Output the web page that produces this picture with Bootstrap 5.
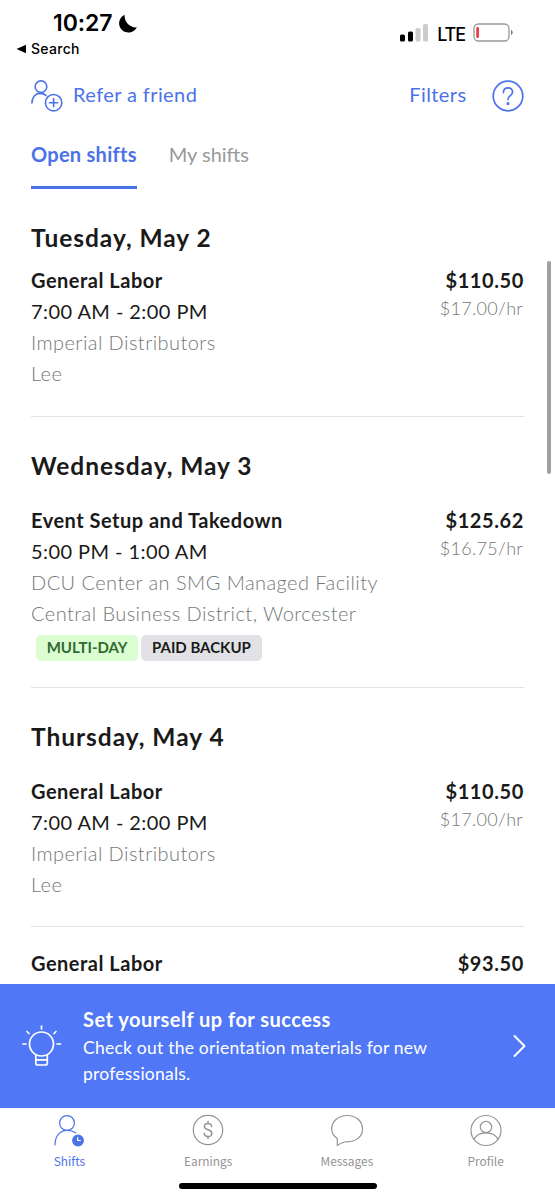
<!DOCTYPE html>
<html lang="en">
<head>
<meta charset="utf-8">
<meta name="viewport" content="width=device-width, initial-scale=1">
<title>Open shifts</title>
<link href="https://cdn.jsdelivr.net/npm/bootstrap@5.3.0/dist/css/bootstrap.min.css" rel="stylesheet">
<style>
  :root { --brand: #4c72e8; --ink: #1a1a1a; --muted: #747878; }
  body { font-family: Lato, "Liberation Sans", sans-serif; color: var(--ink); background: #fff; font-size: 20px; line-height: 31px; }
  svg { display: block; flex: none; }
  .screen { height: 1200px; }
  .statusbar { height: 66px; font-family: Inter, sans-serif; color: #000; padding: 10px 40px 0 16px; }
  .clock { font-size: 23px; font-weight: 600; line-height: 27px; padding-left: 37px; letter-spacing: -.1px; gap: 6px; }
  .back-link { font-size: 14px; font-weight: 500; line-height: 20px; letter-spacing: .3px; margin-top: 2px; }
  .network { font-size: 18px; line-height: 24px; font-weight: 500; letter-spacing: -1.1px; padding-top: 12px; }
  .network-type { padding-top: 1px; }
  .topbar { height: 57px; padding: 0 31px; color: var(--brand); letter-spacing: .4px; }
  .topbar svg { position: relative; top: 1px; }
  .refer { margin-left: 10px; }
  .help { margin-left: 25.5px; }
  .tabs { height: 66px; padding-left: 31px; gap: 32px; }
  .tab-item { height: 66px; padding-top: 16px; color: #999; }
  .tab-item.current { color: var(--brand); font-weight: 700; border-bottom: 3px solid var(--brand); letter-spacing: .27px; }
  .feed { padding: 34px 31px 0; }
  .day { font-size: 24.5px; font-weight: 700; line-height: 30px; margin: 0 0 24px; letter-spacing: .97px; }
  .day.first { margin-bottom: 12px; }
  .shift { border-bottom: 1px solid #e2e2e2; padding-bottom: 27px; margin-bottom: 34px; }
  .shift.tagged { padding-bottom: 26px; }
  .shift.compact { padding-bottom: 26px; margin-bottom: 21px; }
  .role { font-weight: 700; letter-spacing: .5px; }
  .pay { letter-spacing: .6px; }
  .place { color: var(--muted); font-weight: 300; letter-spacing: .44px; }
  .hours { letter-spacing: .43px; }
  .rate { font-size: 18px; line-height: 25px; color: var(--muted); font-weight: 300; letter-spacing: .3px; padding-right: 1px; }
  .tags { gap: 3px; margin: 6px 0 0 5px; }
  .tag { font-size: 15px; font-weight: 700; line-height: 25px; height: 26px; border-radius: 5px; padding: 0 10.7px; }
  .tag-green { background: #dcfcd2; color: #2d6b2b; }
  .tag-grey { background: #e2e2e6; }
  .scroll-thumb { right: 4px; top: 261px; width: 4px; height: 213px; background: #a0a0a0; border-radius: 2px; }
  .promo { height: 124px; background: #5078f6; color: #fff; padding: 0 29px 0 22px; }
  .promo-copy { margin-left: 21px; }
  .promo-title { font-weight: 700; line-height: 30px; letter-spacing: .48px; margin-top: -1px; }
  .promo-text { font-size: 17.5px; line-height: 26px; letter-spacing: .23px; padding-top: 1px; }
  .bottom-nav { height: 92px; font-family: "Noto Sans CJK SC", sans-serif; font-size: 11.9px; line-height: 21px; color: #949494; }
  .bottom-nav .current { color: var(--brand); }
  .home-bar { left: 179px; bottom: 11px; width: 198px; height: 6px; border-radius: 3px; background: #000; }
</style>
</head>
<body>
<div class="screen d-flex flex-column position-relative overflow-hidden">
  <header class="statusbar d-flex justify-content-between flex-shrink-0">
    <div>
      <div class="clock d-flex align-items-center">10:27
        <svg width="20" height="20" viewBox="0 0 20 20"><path d="M6.600 .8A9.300 9.300 0 1 0 18.800 13.300C13.500 14.300 6 9 6.600 .8Z"/></svg>
      </div>
      <div class="back-link d-flex align-items-center gap-1">
        <svg width="11" height="10" viewBox="0 0 11 10"><path d="M.5 5 10 .7v8.6Z"/></svg>Search
      </div>
    </div>
    <div class="network d-flex align-items-start">
      <svg class="me-2" width="30" height="20" viewBox="0 0 30 20"><rect x="1" y="12.500" width="5" height="7" rx="1.5"/><rect x="9" y="9.500" width="5" height="10" rx="1.5"/><g fill="#ccc"><rect x="16.500" y="6" width="5" height="13.500" rx="1.5"/><rect x="24" y="2" width="5" height="17.500" rx="1.5"/></g></svg>
      <span class="network-type">LTE</span>
      <svg class="ms-2" width="42" height="22" viewBox="0 0 42 22"><rect x="1" y="2" width="35" height="17" rx="4.500" fill="none" stroke="#999" stroke-width="1.3"/><rect x="3.300" y="5" width="2.600" height="11" rx="1" fill="#ea3540"/><path d="M38 7.800q3.500 2.700 0 5.400Z" fill="#777"/></svg>
    </div>
  </header>

  <div class="topbar d-flex justify-content-between align-items-center flex-shrink-0">
    <div class="d-flex align-items-center">
      <svg width="32" height="32" viewBox="0 0 32 32" fill="none" stroke="currentColor" stroke-width="1.600" stroke-linecap="round"><circle cx="10" cy="6.700" r="5.800"/><path d="M.9 23C1 17 4.500 13.400 9 13.400c3 0 4.500.6 6 2"/><circle cx="22.600" cy="22.700" r="8.200"/><path d="M22.600 18.600v8.200m-4.100-4.100h8.200"/></svg>
      <span class="refer">Refer a friend</span>
    </div>
    <div class="d-flex align-items-center">
      <span class="filters">Filters</span>
      <svg class="help" width="32" height="32" viewBox="0 0 32 32" fill="none" stroke="currentColor" stroke-width="1.700" stroke-linecap="round"><circle cx="16" cy="16" r="14.800"/><path d="M11.400 12.600c0-3 2-4.800 4.600-4.800s4.600 1.700 4.600 4.200c0 3.600-4.600 3.800-4.600 7.400"/><circle cx="16" cy="23.600" r=".7" fill="currentColor"/></svg>
    </div>
  </div>

  <nav class="tabs d-flex flex-shrink-0">
    <div class="tab-item current">Open shifts</div>
    <div class="tab-item">My shifts</div>
  </nav>

  <main class="feed flex-grow-1 overflow-hidden">
    <h2 class="day first">Tuesday, May 2</h2>
    <article class="shift d-flex justify-content-between">
      <div><div class="role">General Labor</div><div class="hours">7:00 AM - 2:00 PM</div><div class="place">Imperial Distributors</div><div class="place">Lee</div></div>
      <div class="text-end"><div class="role pay">$110.50</div><div class="rate">$17.00/hr</div></div>
    </article>
    <h2 class="day">Wednesday, May 3</h2>
    <article class="shift tagged d-flex justify-content-between">
      <div><div class="role">Event Setup and Takedown</div><div class="hours">5:00 PM - 1:00 AM</div><div class="place">DCU Center an SMG Managed Facility</div><div class="place">Central Business District, Worcester</div>
        <div class="tags d-flex"><span class="tag tag-green">MULTI-DAY</span><span class="tag tag-grey">PAID BACKUP</span></div></div>
      <div class="text-end"><div class="role pay">$125.62</div><div class="rate">$16.75/hr</div></div>
    </article>
    <h2 class="day">Thursday, May 4</h2>
    <article class="shift compact d-flex justify-content-between">
      <div><div class="role">General Labor</div><div class="hours">7:00 AM - 2:00 PM</div><div class="place">Imperial Distributors</div><div class="place">Lee</div></div>
      <div class="text-end"><div class="role pay">$110.50</div><div class="rate">$17.00/hr</div></div>
    </article>
    <article class="d-flex justify-content-between"><div class="role">General Labor</div><div class="role pay">$93.50</div></article>
  </main>

  <section class="promo d-flex align-items-center flex-shrink-0">
    <svg width="40" height="44" viewBox="0 0 40 44" fill="none" stroke="#fff" stroke-width="1.700" stroke-linecap="round"><circle cx="19.500" cy="20" r="12"/><path d="M13.800 31v8q0 2 2 2h7.500q2 0 2-2v-8M13.800 35.800h11.500M19.500 2v3M5 7.500l2 2M34 7.500l-2 2M1 20h3M35 20h3.500"/></svg>
    <div class="promo-copy flex-grow-1"><div class="promo-title">Set yourself up for success</div><div class="promo-text">Check out the orientation materials for new<br>professionals.</div></div>
    <svg width="13" height="24" viewBox="0 0 13 24" fill="none" stroke="#fff" stroke-width="2" stroke-linecap="round" stroke-linejoin="round"><path d="m1.500 2 10 10-10 10"/></svg>
  </section>

  <nav class="bottom-nav row g-0 text-center flex-shrink-0">
    <div class="col-3 current d-flex flex-column align-items-center pt-1"><svg width="34" height="38" viewBox="0 0 34 38" fill="none" stroke="currentColor" stroke-width="1.200" stroke-linecap="round"><circle cx="15" cy="11" r="7.400"/><path d="M3 33c0-9.500 5.500-14.600 12-14.600 4 0 6.500 1 8.500 2.400"/><circle cx="26" cy="28.500" r="5.300" fill="currentColor"/><path d="M25.700 25.500v3h2.700" stroke="#fff"/></svg><span>Shifts</span></div>
    <div class="col-3 d-flex flex-column align-items-center pt-1"><svg width="34" height="38" viewBox="0 0 34 38" fill="none" stroke="currentColor" stroke-width="1.200" stroke-linecap="round"><circle cx="17" cy="18" r="14.700"/><path d="M20.600 14.500c0-2-1.500-3-3.600-3s-3.600 1.200-3.600 3c0 4.300 7.400 2.300 7.400 6.700 0 2-1.500 3.300-3.800 3.300s-3.800-1.200-3.800-3.300M17 9.500v2m0 13v2" stroke-width="1.500"/></svg><span>Earnings</span></div>
    <div class="col-3 d-flex flex-column align-items-center pt-1"><svg width="34" height="38" viewBox="0 0 34 38" fill="none" stroke="currentColor" stroke-width="1.200" stroke-linejoin="round"><path d="M7.300 26.500C3.500 24 1.700 21 1.700 17 1.700 9 8.500 3.500 17.200 3.500S32.500 9 32.500 17c0 8-7 12.800-15.300 12.800-2.500-.4-6 1-9.900 3.700Z"/></svg><span>Messages</span></div>
    <div class="col-3 d-flex flex-column align-items-center pt-1"><svg width="34" height="38" viewBox="0 0 34 38" fill="none" stroke="currentColor" stroke-width="1.200"><circle cx="17" cy="18.500" r="15"/><circle cx="17" cy="15" r="5.700"/><path d="M5 27.500c2-4.500 6.500-6.700 12-6.700s10 2.200 12 6.700"/></svg><span>Profile</span></div>
  </nav>
  <div class="scroll-thumb position-absolute"></div>
  <div class="home-bar position-absolute"></div>
</div>
<script src="https://cdn.jsdelivr.net/npm/bootstrap@5.3.0/dist/js/bootstrap.bundle.min.js"></script>
</body>
</html>
